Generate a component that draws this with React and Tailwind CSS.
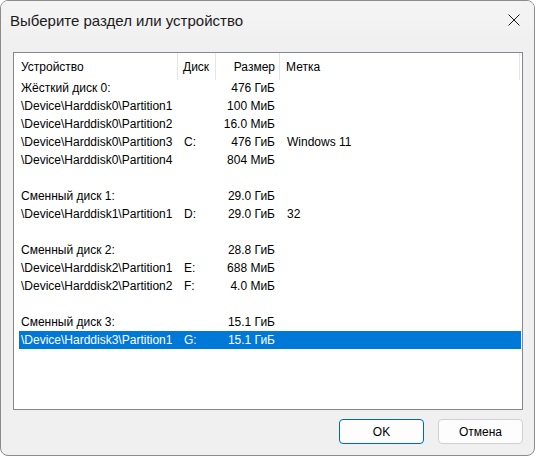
const rows = [
  { dev: 'Жёсткий диск 0:', disk: '', size: '476 ГиБ', label: '' },
  { dev: '\\Device\\Harddisk0\\Partition1', disk: '', size: '100 МиБ', label: '' },
  { dev: '\\Device\\Harddisk0\\Partition2', disk: '', size: '16.0 МиБ', label: '' },
  { dev: '\\Device\\Harddisk0\\Partition3', disk: 'C:', size: '476 ГиБ', label: 'Windows 11' },
  { dev: '\\Device\\Harddisk0\\Partition4', disk: '', size: '804 МиБ', label: '' },
  null,
  { dev: 'Сменный диск 1:', disk: '', size: '29.0 ГиБ', label: '' },
  { dev: '\\Device\\Harddisk1\\Partition1', disk: 'D:', size: '29.0 ГиБ', label: '32' },
  null,
  { dev: 'Сменный диск 2:', disk: '', size: '28.8 ГиБ', label: '' },
  { dev: '\\Device\\Harddisk2\\Partition1', disk: 'E:', size: '688 МиБ', label: '' },
  { dev: '\\Device\\Harddisk2\\Partition2', disk: 'F:', size: '4.0 МиБ', label: '' },
  null,
  { dev: 'Сменный диск 3:', disk: '', size: '15.1 ГиБ', label: '' },
  { dev: '\\Device\\Harddisk3\\Partition1', disk: 'G:', size: '15.1 ГиБ', label: '', selected: true },
]

function Row({ row }) {
  if (!row) return <div className="h-[18px]" />
  return (
    <div
      className={
        'ml-[5px] mr-[1px] flex h-[18px] items-center whitespace-nowrap ' +
        (row.selected ? 'bg-[#0078d7] text-white' : 'text-black')
      }
    >
      <div className="w-[159px] pl-[2px]">{row.dev}</div>
      <div className="w-[38px] pl-[6px]">{row.disk}</div>
      <div className="w-[64px] pr-[5px] text-right">{row.size}</div>
      <div className="flex-1 pl-[7px]">{row.label}</div>
    </div>
  )
}

export default function App() {
  return (
    <div className="h-[457px] w-[536px] bg-white font-['Liberation_Sans',Arial,sans-serif]">
      <div className="flex h-[456px] w-[535px] flex-col overflow-hidden rounded-lg border border-[#8c8c8c] bg-[#f0f0f0]">
        {/* Title bar */}
        <div className="flex h-[37px] shrink-0 items-center justify-between bg-gradient-to-b from-[#f3f3f3] via-[#f3f3f3] to-[#f0f0f0] pl-[9px] pr-[14px] pt-[3px]">
          <span className="text-[15px] text-[#1b1b1b]">Выберите раздел или устройство</span>
          <svg width="12" height="12" viewBox="0 0 12 12" className="mt-[-3px]">
            <path d="M0.5 0.5 L11.5 11.5 M11.5 0.5 L0.5 11.5" stroke="#1b1b1b" strokeWidth="1" fill="none" />
          </svg>
        </div>

        {/* Body */}
        <div className="flex flex-1 flex-col pl-[12px] pt-[14px]">
          <div className="h-[358px] w-[510px] border border-[#828790] bg-white text-[12px]">
            {/* Header */}
            <div className="flex h-[26px] whitespace-nowrap text-black">
              <div className="flex h-[27px] w-[164px] items-center border-r border-[#e5e5e5] pl-[7px] pt-[1px]">Устройство</div>
              <div className="flex h-[27px] w-[38px] items-center border-r border-[#e5e5e5] pl-[5px] pt-[1px]">Диск</div>
              <div className="flex h-[27px] w-[64px] items-center justify-end border-r border-[#e5e5e5] pr-[4px] pt-[1px]">Размер</div>
              <div className="flex h-[27px] w-[240px] items-center border-r border-[#e5e5e5] pl-[6px] pt-[1px]">Метка</div>
            </div>
            {rows.map((r, i) => (
              <Row key={i} row={r} />
            ))}
          </div>

          {/* Buttons */}
          <div className="mt-[9px] flex justify-end gap-[14px] pr-[11px] text-[12px]">
            <button className="h-[25px] w-[85px] rounded-[4px] border border-[#0067c0] bg-[#fdfdfd] text-black">
              OK
            </button>
            <button className="h-[25px] w-[85px] rounded-[4px] border border-[#d0d0d0] bg-[#fdfdfd] text-black">
              Отмена
            </button>
          </div>
        </div>
      </div>
    </div>
  )
}
